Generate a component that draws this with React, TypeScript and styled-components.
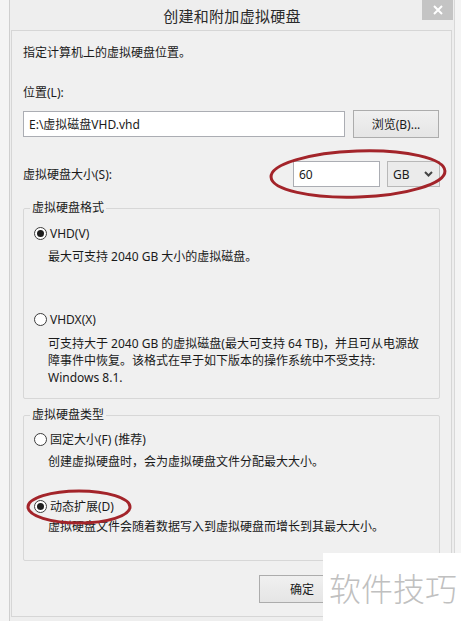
import React from 'react';
import styled, { createGlobalStyle } from 'styled-components';

const GlobalStyle = createGlobalStyle`
  html, body {
    margin: 0;
    padding: 0;
    background: #f4f4f4;
  }
  * {
    box-sizing: border-box;
  }
`;

const Page = styled.div`
  position: relative;
  width: 461px;
  height: 621px;
  overflow: hidden;
  background: #f4f4f4;
  font-family: 'Noto Sans', 'Noto Sans CJK SC', sans-serif;
  font-size: 12px;
  color: #1a1a1a;
`;

const Frame = styled.div`
  margin-left: 9px;
  width: 446px;
  height: 621px;
  background: #eeeeee;
  border-left: 1px solid #cfcfcf;
  border-right: 1px solid #d8d8d8;
`;

const TitleBar = styled.div`
  display: grid;
  grid-template-columns: 1fr auto 1fr;
  height: 30px;
`;

const Title = styled.div`
  grid-column: 2;
  align-self: center;
  font-family: 'Noto Sans CJK SC', sans-serif;
  font-size: 15px;
  color: #2a2a2a;
  letter-spacing: 0.3px;
`;

const CloseButton = styled.div`
  grid-column: 3;
  justify-self: end;
  align-self: start;
  width: 31px;
  height: 20px;
  margin-right: 1px;
  background: #c4c4c4;
  display: flex;
  align-items: center;
  justify-content: center;
`;

const Panel = styled.div`
  margin: 0 2px 0 1px;
  height: 587px;
  background: #f0f0f0;
  border: 1px solid #d6d6d6;
  padding: 14px 11px 0 11px;
`;

const Text = styled.div<{ $top?: number }>`
  line-height: 16px;
  margin-top: ${p => p.$top ?? 0}px;
  white-space: nowrap;
`;

const Row = styled.div<{ $top: number }>`
  display: flex;
  align-items: center;
  margin-top: ${p => p.$top}px;
`;

const TextField = styled.div<{ $width: number }>`
  width: ${p => p.$width}px;
  height: 26px;
  background: #fff;
  border: 1px solid #abadb3;
  padding: 0 5px;
  display: flex;
  align-items: center;
`;

const Button = styled.div<{ $left?: number }>`
  width: 86px;
  height: 28px;
  margin-left: ${p => p.$left ?? 0}px;
  border: 1px solid #acacac;
  background: linear-gradient(#f0f0f0, #e5e5e5);
  display: flex;
  align-items: center;
  justify-content: center;
`;

const Select = styled.div`
  width: 53px;
  height: 26px;
  margin-left: 7px;
  border: 1px solid #b8b8b8;
  background: #ebebeb;
  padding: 0 6px 0 5px;
  display: flex;
  align-items: center;
  justify-content: space-between;
`;

const Group = styled.fieldset<{ $top: number; $bottom: number }>`
  margin: ${p => p.$top}px 0 0 0;
  padding: 0 6px ${p => p.$bottom}px 6px;
  min-inline-size: 0;
  border: 1px solid #d7d7d7;
  border-radius: 2px;
`;

const Legend = styled.legend`
  padding: 0 2px;
  line-height: 16px;
`;

const RadioRow = styled.div<{ $top: number }>`
  display: flex;
  align-items: center;
  gap: 3px;
  padding-left: 4px;
  height: 16px;
  margin-top: ${p => p.$top}px;
`;

const RadioCircle = styled.span<{ $checked?: boolean }>`
  width: 13px;
  height: 13px;
  border-radius: 50%;
  border: 1px solid #3c3c3c;
  background: #fff;
  display: flex;
  align-items: center;
  justify-content: center;
  &::after {
    content: '';
    width: 7px;
    height: 7px;
    border-radius: 50%;
    background: ${p => (p.$checked ? '#1e1e1e' : 'transparent')};
  }
`;

const Description = styled.div<{ $top: number }>`
  padding-left: 18px;
  margin-top: ${p => p.$top}px;
  line-height: 17px;
  white-space: nowrap;
`;

const Annotation = styled.svg`
  position: absolute;
  overflow: visible;
`;

const Watermark = styled.div`
  position: absolute;
  right: 0;
  bottom: 0;
  width: 138px;
  height: 68px;
  background: #fff;
  padding-left: 6px;
  display: flex;
  align-items: center;
  font-family: 'Noto Sans CJK SC', sans-serif;
  font-weight: 300;
  font-size: 32px;
  color: #c0c0c0;
  white-space: nowrap;
`;

function Radio({ checked, label, top }: { checked?: boolean; label: string; top: number }) {
  return (
    <RadioRow $top={top}>
      <RadioCircle $checked={checked} />
      <span>{label}</span>
    </RadioRow>
  );
}

export default function App() {
  return (
    <Page>
      <GlobalStyle />
      <Frame>
        <TitleBar>
          <Title>创建和附加虚拟硬盘</Title>
          <CloseButton>
            <svg width="10" height="10" viewBox="0 0 10 10">
              <path d="M1 1 L9 9 M9 1 L1 9" stroke="#fff" strokeWidth="2" />
            </svg>
          </CloseButton>
        </TitleBar>
        <Panel>
          <Text>指定计算机上的虚拟硬盘位置。</Text>
          <Text $top={24}>位置(L):</Text>
          <Row $top={9}>
            <TextField $width={322}>E:\虚拟磁盘VHD.vhd</TextField>
            <Button $left={8}>浏览(B)...</Button>
          </Row>
          <Row $top={23}>
            <span>虚拟硬盘大小(S):</span>
            <TextField $width={87} style={{ marginLeft: 'auto' }}>60</TextField>
            <Select>
              <span>GB</span>
              <svg width="9" height="6" viewBox="0 0 9 6">
                <path d="M1 1 L4.5 4.5 L8 1" stroke="#444" strokeWidth="2" fill="none" />
              </svg>
            </Select>
          </Row>

          <Group $top={13} $bottom={12}>
            <Legend>虚拟硬盘格式</Legend>
            <Radio checked label="VHD(V)" top={9} />
            <Description $top={7}>最大可支持 2040 GB 大小的虚拟磁盘。</Description>
            <Radio label="VHDX(X)" top={46} />
            <Description $top={8}>
              可支持大于 2040 GB 的虚拟磁盘(最大可支持 64 TB)，并且可从电源故
              <br />
              障事件中恢复。该格式在早于如下版本的操作系统中不受支持:
              <br />
              Windows 8.1.
            </Description>
          </Group>

          <Group $top={8} $bottom={25}>
            <Legend>虚拟硬盘类型</Legend>
            <Radio label="固定大小(F) (推荐)" top={8} />
            <Description $top={6}>创建虚拟硬盘时，会为虚拟硬盘文件分配最大大小。</Description>
            <Radio checked label="动态扩展(D)" top={28} />
            <Description $top={4}>虚拟硬盘文件会随着数据写入到虚拟硬盘而增长到其最大大小。</Description>
          </Group>

          <Row $top={14}>
            <Button $left={236}>确定</Button>
          </Row>
        </Panel>
      </Frame>

      <Annotation width="180" height="52" style={{ left: 268, top: 148 }}>
        <ellipse cx="90" cy="26" rx="87" ry="23" fill="none" stroke="#a3242a" strokeWidth="3" transform="rotate(-2 90 26)" />
      </Annotation>
      <Annotation width="106" height="36" style={{ left: 26, top: 489 }}>
        <ellipse cx="53" cy="18" rx="51" ry="16" fill="none" stroke="#a3242a" strokeWidth="3" />
      </Annotation>

      <Watermark>软件技巧</Watermark>
    </Page>
  );
}
